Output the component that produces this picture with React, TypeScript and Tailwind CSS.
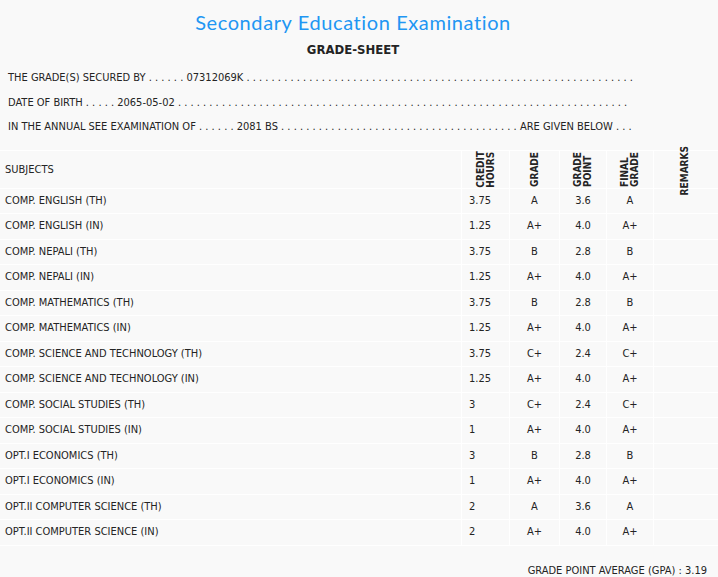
const rows = [
  ['COMP. ENGLISH (TH)', '3.75', 'A', '3.6', 'A'],
  ['COMP. ENGLISH (IN)', '1.25', 'A+', '4.0', 'A+'],
  ['COMP. NEPALI (TH)', '3.75', 'B', '2.8', 'B'],
  ['COMP. NEPALI (IN)', '1.25', 'A+', '4.0', 'A+'],
  ['COMP. MATHEMATICS (TH)', '3.75', 'B', '2.8', 'B'],
  ['COMP. MATHEMATICS (IN)', '1.25', 'A+', '4.0', 'A+'],
  ['COMP. SCIENCE AND TECHNOLOGY (TH)', '3.75', 'C+', '2.4', 'C+'],
  ['COMP. SCIENCE AND TECHNOLOGY (IN)', '1.25', 'A+', '4.0', 'A+'],
  ['COMP. SOCIAL STUDIES (TH)', '3', 'C+', '2.4', 'C+'],
  ['COMP. SOCIAL STUDIES (IN)', '1', 'A+', '4.0', 'A+'],
  ['OPT.I ECONOMICS (TH)', '3', 'B', '2.8', 'B'],
  ['OPT.I ECONOMICS (IN)', '1', 'A+', '4.0', 'A+'],
  ['OPT.II COMPUTER SCIENCE (TH)', '2', 'A', '3.6', 'A'],
  ['OPT.II COMPUTER SCIENCE (IN)', '2', 'A+', '4.0', 'A+'],
];

const dots = (n: number) => Array(n).fill('.').join(' ');

function VHead({ lines }: { lines: string[] }) {
  return (
    <div className="flex items-end justify-center h-full pb-[2px]">
      <span className="[writing-mode:vertical-rl] rotate-180 font-bold text-[10px] leading-[10px] text-left">
        {lines.map((l, i) => (
          <span key={i} className="block">{l}</span>
        ))}
      </span>
    </div>
  );
}

export default function App() {
  return (
    <div className="w-[718px] h-[577px] bg-[#f9f9f9] text-[#242424] overflow-hidden font-['DejaVu_Sans_Condensed','DejaVu_Sans',sans-serif] text-[11px]">
      <h1 className="text-center text-[#2196f3] text-[20px] font-normal pt-[9px] pr-[12px] leading-[26px] font-['Lato',sans-serif] tracking-[0.6px]">
        Secondary Education Examination
      </h1>
      <div className="text-center text-[13px] leading-[16px] mt-[7px] pr-[12px] font-semibold">GRADE-SHEET</div>

      <div className="pl-[8px] mt-[8px] flex flex-col leading-[24.5px] whitespace-pre">
        <div>THE GRADE(S) SECURED BY {dots(6)} 07312069K {dots(62)}</div>
        <div>DATE OF BIRTH {dots(5)} 2065-05-02 {dots(72)}</div>
        <div>IN THE ANNUAL SEE EXAMINATION OF {dots(6)} 2081 BS {dots(38)} ARE GIVEN BELOW {dots(3)}</div>
      </div>

      <div className="mt-[10px] border-t border-white">
        <div className="grid grid-cols-[461px_48px_50px_47px_47px_65px] h-[38px] border-b border-white">
          <div className="flex items-center pl-[5px]">SUBJECTS</div>
          <div className="border-l border-white"><VHead lines={['CREDIT', 'HOURS']} /></div>
          <div className="border-l border-white"><VHead lines={['GRADE']} /></div>
          <div className="border-l border-white"><VHead lines={['GRADE', 'POINT']} /></div>
          <div className="border-l border-white"><VHead lines={['FINAL', 'GRADE']} /></div>
          <div className="border-l border-white relative">
            <span className="absolute left-[26px] top-[-5px] [writing-mode:vertical-rl] rotate-180 font-bold text-[10px] leading-[10px]">
              REMARKS
            </span>
          </div>
        </div>
        {rows.map((r) => (
          <div key={r[0]} className="grid grid-cols-[461px_48px_50px_47px_47px_65px] h-[25.5px] border-b border-white items-stretch">
            <div className="flex items-center pl-[5px]">{r[0]}</div>
            <div className="flex items-center pl-[7px] border-l border-white">{r[1]}</div>
            <div className="flex items-center justify-center border-l border-white">{r[2]}</div>
            <div className="flex items-center justify-center border-l border-white">{r[3]}</div>
            <div className="flex items-center justify-center border-l border-white">{r[4]}</div>
            <div className="border-l border-white" />
          </div>
        ))}
      </div>

      <div className="text-right pr-[11px] mt-[18px] leading-[14px]">GRADE POINT AVERAGE (GPA) : 3.19</div>
    </div>
  );
}
